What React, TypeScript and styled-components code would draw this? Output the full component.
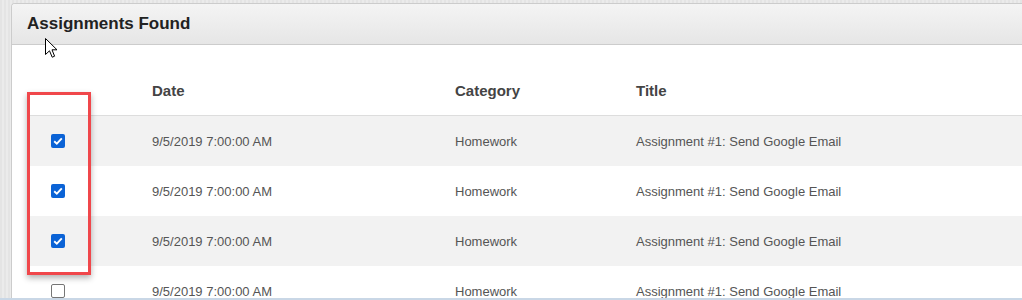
import React from "react";
import styled, { createGlobalStyle } from "styled-components";

const GlobalStyle = createGlobalStyle`
  html, body {
    margin: 0;
    padding: 0;
    background: #e6e6e6;
    font-family: "Liberation Sans", Arial, sans-serif;
  }
`;

const StyledPage = styled.div`
  position: relative;
  height: 300px;
  overflow: hidden;
  display: flex;
  flex-direction: column;
  background: repeating-linear-gradient(
    90deg,
    #e4e4e4 0,
    #e4e4e4 2px,
    #ebebeb 2px,
    #ebebeb 4px
  );
`;

const StyledPanel = styled.div`
  flex: 1;
  margin: 3px -20px 0 11px;
  background: #ffffff;
  border: 1px solid #cccccc;
  border-bottom: none;
  border-radius: 4px 4px 0 0;
  overflow: hidden;
`;

const StyledPanelHeader = styled.div`
  height: 40px;
  display: flex;
  align-items: center;
  padding: 0 15px;
  background: linear-gradient(#f4f4f4, #e6e6e6);
  border-bottom: 1px solid #cccccc;
  font-size: 17px;
  font-weight: bold;
  color: #222222;
`;

const StyledPanelBody = styled.div`
  padding: 21px 0 0 16px;
`;

const StyledRow = styled.div<{ $striped?: boolean; $head?: boolean }>`
  display: grid;
  grid-template-columns: 112px 303px 181px 1fr;
  align-items: center;
  height: ${(p) => (p.$head ? "49px" : "50px")};
  background: ${(p) => (p.$striped ? "#f2f2f2" : "#ffffff")};
  border-bottom: ${(p) => (p.$head ? "1px solid #dddddd" : "none")};
  font-size: ${(p) => (p.$head ? "15px" : "13px")};
  font-weight: ${(p) => (p.$head ? "bold" : "normal")};
  color: ${(p) => (p.$head ? "#444444" : "#555555")};
`;

const StyledCell = styled.div`
  padding-left: 12px;
  white-space: nowrap;
`;

const StyledCheckCell = styled.div`
  padding-left: 23px;
  display: flex;
  align-items: center;
`;

const StyledCheckbox = styled.span<{ $checked?: boolean }>`
  box-sizing: border-box;
  width: 14px;
  height: 14px;
  border-radius: 2px;
  display: flex;
  align-items: center;
  justify-content: center;
  background: ${(p) => (p.$checked ? "#0b63d6" : "#ffffff")};
  border: ${(p) => (p.$checked ? "none" : "1.5px solid #767676")};
`;

const StyledHighlight = styled.div`
  position: absolute;
  left: 27px;
  top: 92px;
  width: 58px;
  height: 177px;
  border: 3px solid #f0474b;
  box-shadow: 0 3px 6px rgba(0, 0, 0, 0.3);
  pointer-events: none;
`;

const StyledCursor = styled.svg`
  position: absolute;
  left: 45px;
  top: 38px;
`;

const StyledBottomEdge = styled.div`
  height: 2px;
  background: #c9d7e6;
`;

const rows = [true, true, true, false];

const Checkbox: React.FC<{ checked: boolean }> = ({ checked }) => (
  <StyledCheckbox $checked={checked}>
    {checked && (
      <svg width="10" height="8" viewBox="0 0 10 8">
        <path
          d="M1.2 4.2 L3.8 6.6 L8.8 1.4"
          fill="none"
          stroke="#ffffff"
          strokeWidth="1.9"
        />
      </svg>
    )}
  </StyledCheckbox>
);

const App: React.FC = () => {
  return (
    <StyledPage>
      <GlobalStyle />
      <StyledPanel>
        <StyledPanelHeader>Assignments Found</StyledPanelHeader>
        <StyledPanelBody>
          <StyledRow $head>
            <StyledCell />
            <StyledCell>Date</StyledCell>
            <StyledCell>Category</StyledCell>
            <StyledCell>Title</StyledCell>
          </StyledRow>
          {rows.map((checked, i) => (
            <StyledRow key={i} $striped={i % 2 === 0}>
              <StyledCheckCell>
                <Checkbox checked={checked} />
              </StyledCheckCell>
              <StyledCell>9/5/2019 7:00:00 AM</StyledCell>
              <StyledCell>Homework</StyledCell>
              <StyledCell>Assignment #1: Send Google Email</StyledCell>
            </StyledRow>
          ))}
        </StyledPanelBody>
      </StyledPanel>
      <StyledBottomEdge />
      <StyledHighlight />
      <StyledCursor width="14" height="21" viewBox="0 0 14 21">
        <path
          d="M0.5 0.5 L0.5 16.5 L4.5 12.8 L7.2 19.2 L9.6 18.2 L7 11.8 L12 11.8 Z"
          fill="#ffffff"
          stroke="#000000"
          strokeWidth="1"
          strokeLinejoin="miter"
        />
      </StyledCursor>
    </StyledPage>
  );
};

export default App;
